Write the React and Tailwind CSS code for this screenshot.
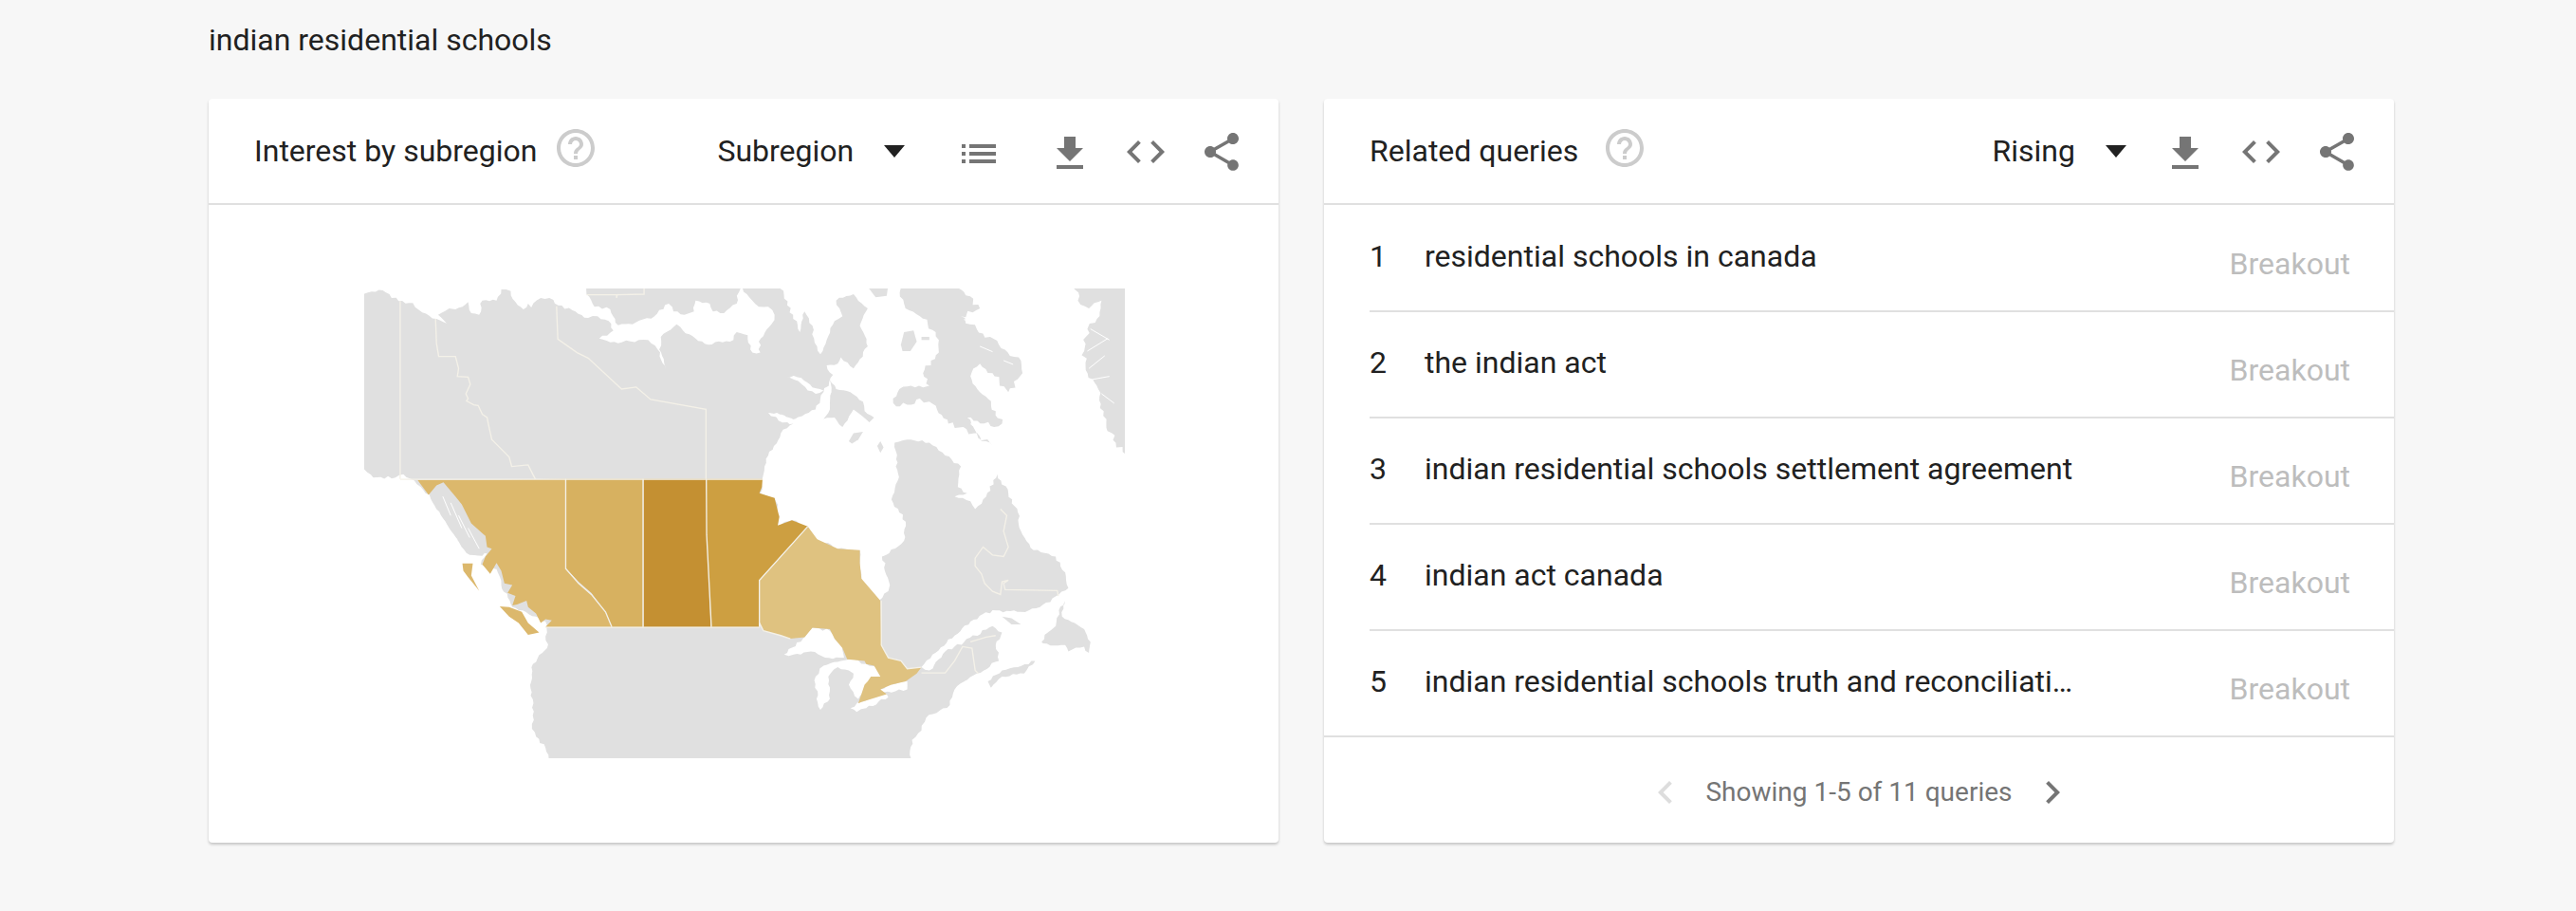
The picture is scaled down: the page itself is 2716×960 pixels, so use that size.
const ICONS = {
  help: 'M11 18h2v-2h-2v2zm1-16C6.48 2 2 6.48 2 12s4.48 10 10 10 10-4.48 10-10S17.52 2 12 2zm0 18c-4.41 0-8-3.59-8-8s3.59-8 8-8 8 3.59 8 8-3.59 8-8 8zm0-14c-2.21 0-4 1.79-4 4h2c0-1.1.9-2 2-2s2 .9 2 2c0 2-3 1.75-3 5h2c0-2.25 3-2.5 3-5 0-2.21-1.79-4-4-4z',
  list: 'M3 13h2v-2H3v2zm0 4h2v-2H3v2zm0-8h2V7H3v2zm4 4h14v-2H7v2zm0 4h14v-2H7v2zM7 7v2h14V7H7z',
  download: 'M19 9h-4V3H9v6H5l7 7 7-7zM5 18v2h14v-2H5z',
  code: 'M9.4 16.6L4.8 12l4.6-4.6L8 6l-6 6 6 6 1.4-1.4zm5.2 0l4.6-4.6-4.6-4.6L16 6l6 6-6 6-1.4-1.4z',
  share: 'M18 16.08c-.76 0-1.44.3-1.96.77L8.91 12.7c.05-.23.09-.46.09-.7s-.04-.47-.09-.7l7.05-4.11c.54.5 1.25.81 2.04.81 1.66 0 3-1.34 3-3s-1.34-3-3-3-3 1.34-3 3c0 .24.04.47.09.7L8.04 9.81C7.5 9.31 6.79 9 6 9c-1.66 0-3 1.34-3 3s1.34 3 3 3c.79 0 1.5-.31 2.04-.81l7.12 4.16c-.05.21-.08.43-.08.65 0 1.61 1.31 2.92 2.92 2.92 1.61 0 2.92-1.31 2.92-2.92s-1.31-2.92-2.92-2.92z',
  left: 'M15.41 7.41L14 6l-6 6 6 6 1.41-1.41L10.83 12z',
  right: 'M10 6L8.59 7.41 13.17 12l-4.58 4.59L10 18l6-6z',
};

function Icon({ name, className }) {
  return (
    <svg viewBox="0 0 24 24" className={className} fill="currentColor">
      <path d={ICONS[name]} />
    </svg>
  );
}

// map coordinates: 3 units per page pixel
const SEA = [
  // arctic, north-west
  '0,0 0,30 70,18 120,52 165,58 185,80 240,108 272,122 245,95 280,75 300,78 340,55 350,90 375,95 385,50 430,50 445,15 475,20 490,55 515,78 530,60 540,72 570,42 610,48 625,65 680,85 720,105 750,100 785,115 800,145 755,170 815,185 880,175 910,175 940,205 965,268 945,205 950,165 1000,125 1020,145 1060,170 1100,190 1180,175 1190,150 1225,160 1240,215 1265,215 1260,180 1300,125 1310,95 1290,70 1260,70 1230,40 1200,0 1190,60 1150,90 1115,85 1105,60 1060,50 1055,85 1025,95 990,85 975,60 930,100 860,125 815,128 790,78 740,70 715,30 715,0',
  // hudson bay, labrador, st lawrence, atlantic
  '1325,0 1390,150 1405,85 1430,130 1435,170 1455,220 1475,175 1500,115 1525,100 1505,50 1560,30 1605,75 1580,130 1605,195 1560,265 1520,230 1510,250 1475,255 1495,285 1465,340 1440,395 1375,425 1320,412 1290,405 1335,432 1370,440 1330,470 1290,540 1275,600 1270,620 1265,660 1310,675 1325,730 1320,762 1365,745 1415,765 1445,805 1510,835 1580,840 1580,880 1585,930 1640,1000 1670,970 1675,950 1650,860 1720,810 1725,750 1680,680 1700,620 1695,552 1690,500 1730,490 1800,500 1850,540 1900,575 1890,640 1920,660 1880,670 1930,685 1945,710 1980,670 2015,600 2050,660 2080,720 2090,780 2130,840 2200,860 2230,910 2240,960 2210,980 2150,1020 2090,1035 2000,1030 1940,1060 1880,1110 1810,1170 1775,1210 1800,1220 1850,1160 1910,1130 2000,1080 2030,1100 2010,1140 2020,1190 1950,1230 1880,1280 1865,1330 1790,1370 1775,1410 1745,1440 1740,1510 2430,1510 2430,0',
  // pacific
  '0,585 12,585 40,610 110,610 135,600 170,620 218,665 240,700 290,750 320,830 400,850 380,885 430,900 445,950 480,1020 555,1050 585,1065 590,1100 590,1150 575,1165 545,1200 538,1300 548,1350 542,1390 555,1430 585,1465 605,1510 0,1510',
  // chesterfield inlet
  '1345,290 1395,295 1430,325 1465,335 1440,345 1415,335 1385,305',
  '1290,405 1330,412 1375,430 1335,436',
  // great lakes
  '1340,1170 1400,1120 1430,1085 1485,1095 1500,1120 1525,1140 1530,1180 1470,1180 1425,1160 1370,1170',
  '1440,1240 1465,1205 1520,1190 1560,1185 1600,1200 1635,1210 1650,1240 1615,1245 1605,1260 1575,1310 1545,1265 1560,1230 1545,1220 1510,1210 1480,1240 1485,1310 1455,1345 1443,1310',
  '1550,1340 1585,1320 1665,1295 1670,1305 1600,1340 1570,1352',
  '1645,1280 1680,1265 1730,1255 1730,1280 1680,1290 1645,1290',
];

const LAND = [
  // baffin
  ['1700,0 1880,0 1960,75 1900,100 1950,140 2020,190 2090,240 2095,280 2050,340 2000,280 1960,250 1930,290 1960,340 2010,400 2030,440 2005,450 1920,420 1950,470 2000,510 1960,480 1860,440 1800,370 1770,360 1730,380 1695,385 1685,360 1705,330 1780,325 1800,320 1780,280 1830,215 1820,150 1770,100 1720,60', 9],
  // southampton
  ['1485,300 1505,330 1550,340 1590,370 1595,400 1625,420 1610,435 1580,410 1560,395 1525,450 1500,420 1465,425 1485,395 1490,340', 3],
  // greenland
  ['2265,0 2430,0 2430,545 2390,500 2360,440 2340,390 2330,320 2295,270 2290,210 2300,140 2325,120 2345,50 2305,75 2270,50', 9],
  // small arctic islands
  ['1710,190 1720,150 1750,145 1760,180 1740,210 1715,210', 0],
  ['1775,165 1800,165 1800,175 1775,175', 0],
  ['1545,495 1560,470 1590,465 1575,490 1555,503', 0],
  ['1635,510 1645,495 1655,515 1645,532', 0],
  ['1600,0 1670,0 1665,35 1630,40', 0],
  // newfoundland, anticosti, nova scotia
  ['2155,1130 2175,1100 2200,1080 2210,1030 2230,1000 2220,1050 2260,1070 2290,1090 2310,1130 2305,1165 2290,1145 2240,1160 2230,1140 2160,1135', 5],
  ['2030,1050 2060,1055 2090,1075 2060,1075', 0],
  ['1985,1255 2030,1220 2080,1210 2135,1190 2100,1230 2030,1240 1995,1275', 4],
  // alaska panhandle
  ['218,665 240,635 262,625 300,670 320,695 350,755 395,795 400,840 385,858 345,855 320,830 280,770 240,710', 3],
];

const PROVINCES = [
  // british columbia
  ['#dcb86c', '180,618 648,615 648,898 690,945 730,980 775,1035 795,1083 585,1083 605,1062 585,1058 570,1070 555,1040 530,1020 525,1000 495,1012 480,1015 490,985 465,975 480,950 455,945 445,905 430,880 410,915 385,885 395,860 415,835 400,830 395,795 350,755 320,695 300,670 262,625 240,635 215,665'],
  ['#dcb86c', '440,1018 470,1020 510,1035 530,1070 565,1100 530,1108 500,1070 470,1050'],
  ['#dcb86c', '322,882 355,882 350,920 375,968 340,925 325,905'],
  // alberta
  ['#d7b160', '650,615 893,615 893,1083 795,1083 775,1035 730,975 690,940 650,898'],
  // saskatchewan
  ['#c49032', '895,615 1093,615 1108,1083 895,1083'],
  // manitoba
  ['#cd9f41', '1095,615 1272,615 1270,640 1262,660 1310,675 1325,735 1320,762 1365,745 1415,765 1262,935 1262,1083 1110,1083 1095,790'],
  // ontario
  ['#dfc280', '1415,765 1445,805 1510,835 1580,840 1580,880 1585,930 1645,1000 1648,1140 1670,1180 1710,1190 1730,1215 1775,1210 1760,1230 1725,1255 1680,1265 1645,1280 1665,1295 1585,1320 1575,1325 1595,1265 1605,1255 1615,1240 1645,1240 1625,1205 1600,1200 1595,1190 1540,1185 1525,1150 1500,1120 1485,1090 1430,1085 1405,1115 1360,1120 1330,1110 1275,1095 1262,1070 1262,935'],
];

const BORDERS = [
  '125,52 125,615',
  '237,108 240,185 247,227 300,227 310,265 306,290 340,292 347,315 333,345 340,360 335,368 358,380 372,382 385,410 400,420 405,445 415,490 435,510 470,545 478,575 530,570 545,600 553,615',
  '620,68 624,172 685,215 720,232 826,330 872,324 918,363 1093,394 1093,615',
  '715,32 810,32 810,42 812,32 897,30 897,12',
  '125,616 1272,616',
  '585,1084 1262,1084',
  '649,615 649,898 690,945 730,980 775,1035 795,1083',
  '894,615 894,1083',
  '1094,615 1095,790 1110,1083',
  '1415,765 1262,935 1262,1083',
  '1262,1070 1275,1095 1330,1110 1360,1120',
  '1648,1000 1648,1140 1670,1180 1710,1190 1730,1215 1775,1210',
  // quebec, labrador, new brunswick
  '2025,710 2045,730 2035,780 2050,830 2035,860 2000,855 1970,830 1945,865 1945,890 1965,915 1975,945 2000,970 2025,980 2030,940 2050,935 2035,945 2040,965 2205,968 2208,985',
  '1775,1228 1850,1228 1880,1190 1905,1145 1935,1150 1945,1220 1955,1230',
  '1930,1130 1980,1115 2010,1110',
];

// fjords on the coast and inside greenland
const FRINGE = [
  '260,670 285,730', '285,690 320,770', '310,730 345,800', '340,770 375,835',
  '2310,140 2370,175', '2300,210 2365,170', '2305,265 2355,225', '2315,300 2370,290', '2345,345 2385,375',
  '1910,110 1945,125', '1960,195 2000,212', '2035,240 2065,252', '1975,330 2010,355', '1930,440 1960,465',
];

// breaks straight edges of a coast into small teeth
function rough(points, amp) {
  if (!amp) return points;
  const pts = points.split(' ').map((p) => p.split(',').map(Number));
  const out = [];
  pts.forEach(([x, y], i) => {
    const [nx, ny] = pts[(i + 1) % pts.length];
    const len = Math.hypot(nx - x, ny - y);
    const n = Math.max(1, Math.floor(len / 11));
    for (let k = 0; k < n; k++) {
      const t = k / n;
      const h = Math.sin((i + 1) * 12.9898 + k * 78.233) * 43758.5453;
      const off = k === 0 ? 0 : ((h - Math.floor(h)) - 0.5) * 2 * amp;
      out.push(`${(x + (nx - x) * t - ((ny - y) / len) * off).toFixed(1)},${(y + (ny - y) * t + ((nx - x) / len) * off).toFixed(1)}`);
    }
  });
  return out.join(' ');
}

function CanadaMap() {
  return (
    <svg viewBox="12 12 2406 1486" className="block w-[802px] h-[495px]">
      <rect x="0" y="0" width="2430" height="1510" fill="#e0e0e0" />
      {SEA.map((p, i) => <polygon key={i} points={rough(p, 5)} fill="#fff" />)}
      {LAND.map(([p, amp], i) => <polygon key={i} points={rough(p, amp)} fill="#e0e0e0" />)}
      {FRINGE.map((p, i) => <polyline key={i} points={p} fill="none" stroke="#fff" strokeWidth="3" />)}
      {PROVINCES.map(([c, p], i) => <polygon key={i} points={p} fill={c} />)}
      {BORDERS.map((p, i) => <polyline key={i} points={p} fill="none" stroke="#f4f1e8" strokeWidth="4" />)}
    </svg>
  );
}

function Dropdown({ label, className }) {
  return (
    <div className={`flex items-center gap-[32px] ${className}`}>
      <span>{label}</span>
      <span className="w-0 h-0 border-x-[11px] border-x-transparent border-t-[13px] border-t-[#212121]" />
    </div>
  );
}

function CardHeader({ title, titleClass, children }) {
  return (
    <div className="flex items-center h-[112px] border-b-2 border-[#e0e0e0] pl-[48px] pr-[36px]">
      <span>{title}</span>
      <Icon name="help" className={`w-12 h-12 text-[#cccccc] relative -top-[3px] ${titleClass}`} />
      {children}
    </div>
  );
}

function Actions() {
  return (
    <div className="flex items-center gap-8 text-[#757575]">
      <Icon name="download" className="w-12 h-12 relative top-[3px]" />
      <Icon name="code" className="w-12 h-12 relative top-px" />
      <Icon name="share" className="w-12 h-12 relative top-px" />
    </div>
  );
}

const QUERIES = [
  'residential schools in canada',
  'the indian act',
  'indian residential schools settlement agreement',
  'indian act canada',
  'indian residential schools truth and reconciliati…',
];

export default function App() {
  return (
    <div className="w-[2716px] h-[960px] bg-[#f7f7f7] pl-[220px] pt-[23px] text-[32px] leading-[38px] text-[#212121] font-['Roboto',sans-serif] overflow-hidden">
      <div className="h-[81px]">indian residential schools</div>
      <div className="flex gap-[48px]">
        <div className="w-[1128px] h-[784px] bg-white rounded shadow-[0_2px_3px_rgba(0,0,0,0.2)]">
          <CardHeader title="Interest by subregion" titleClass="ml-[17px]">
            <Dropdown label="Subregion" className="ml-[125px]" />
            <Icon name="list" className="w-12 h-12 text-[#757575] ml-[54px] relative top-[3px]" />
            <div className="ml-auto"><Actions /></div>
          </CardHeader>
          <div className="pl-[164px] pt-[88px]">
            <CanadaMap />
          </div>
        </div>
        <div className="w-[1128px] h-[784px] bg-white rounded shadow-[0_2px_3px_rgba(0,0,0,0.2)]">
          <CardHeader title="Related queries" titleClass="ml-[25px]">
            <Dropdown label="Rising" className="ml-auto" />
            <div className="ml-[38px]"><Actions /></div>
          </CardHeader>
          <div className="pt-[1px]">
            {QUERIES.map((q, i) => (
              <div key={q} className={`flex items-center h-[112px] border-b-2 border-[#e0e0e0] pr-[46px] ${i === 4 ? 'pl-[48px]' : 'ml-[48px]'}`}>
                <span className="w-[58px] relative -top-[2px]">{i + 1}</span>
                <span className="whitespace-nowrap relative -top-[2px]">{q}</span>
                <span className="ml-auto text-[#bdbdbd] relative top-[6px]">Breakout</span>
              </div>
            ))}
          </div>
          <div className="flex items-center justify-center h-[111px] pt-[4px] text-[28px] text-[#757575]">
            <Icon name="left" className="w-12 h-12 text-[#dddddd]" />
            <span className="mx-[18px]">Showing 1-5 of 11 queries</span>
            <Icon name="right" className="w-12 h-12" />
          </div>
        </div>
      </div>
    </div>
  );
}
